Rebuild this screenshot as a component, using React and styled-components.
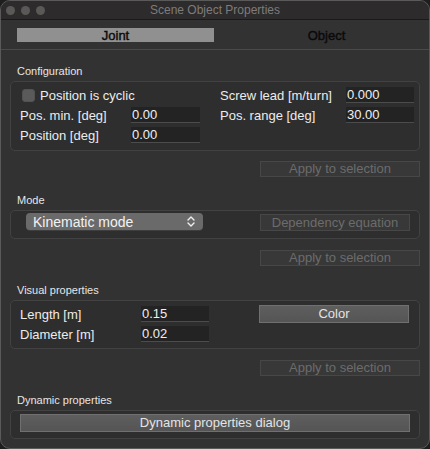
import React from 'react';
import styled, { createGlobalStyle } from 'styled-components';

const GlobalStyle = createGlobalStyle`
  html, body {
    margin: 0;
    padding: 0;
    background: #1e1e1e;
  }
  body {
    font-family: "Liberation Sans", Arial, sans-serif;
  }
`;

const Window = styled.div`
  width: 430px;
  height: 449px;
  box-sizing: border-box;
  background: #323232;
  border: 1px solid #5a5a5a;
  border-radius: 10px;
  overflow: hidden;
  display: flex;
  flex-direction: column;
`;

const TitleBar = styled.div`
  height: 18px;
  flex: none;
  background: #2d2b2b;
  border-bottom: 1px solid #1a1a1a;
  display: flex;
  align-items: center;
  position: relative;
  padding-left: 5px;
  gap: 6px;
`;

const Light = styled.span`
  width: 9px;
  height: 9px;
  border-radius: 50%;
  background: #5b5858;
`;

const Title = styled.div`
  position: absolute;
  left: 0;
  right: 0;
  text-align: center;
  font-size: 12px;
  color: #7e7b7b;
  pointer-events: none;
`;

const TabBar = styled.div`
  display: grid;
  grid-template-columns: 197px 197px;
  column-gap: 14px;
  padding: 8px 0 7px 16px;
  border-bottom: 1px solid #4a4a4a;
`;

const Tab = styled.div`
  height: 14px;
  line-height: 15px;
  text-align: center;
  font-size: 13px;
  color: #0a0a0a;
  -webkit-text-stroke: 0.4px #0a0a0a;
  background: ${p => (p.$active ? '#909090' : 'transparent')};
`;

const Content = styled.div`
  display: flex;
  flex-direction: column;
  padding: 0 9px 0 9px;
`;

const SectionLabel = styled.div`
  font-size: 11px;
  line-height: 14px;
  color: #e6e6e6;
  margin: ${p => p.$top}px 0 3px 7px;
`;

const Group = styled.div`
  border: 1px solid #424242;
  border-radius: 5px;
  background: #2e2e2e;
  padding: ${p => p.$pad};
`;

const FormGrid = styled.div`
  display: grid;
  grid-template-columns: ${p => p.$cols};
  grid-auto-rows: 16px;
  row-gap: 4px;
  align-items: center;
`;

const Label = styled.span`
  font-size: 13px;
  color: #ececec;
  white-space: nowrap;
`;

const Field = styled.div`
  height: 15px;
  background: #232323;
  border-bottom: 1px solid #4c4c4c;
  font-size: 13px;
  line-height: 16px;
  color: #f0f0f0;
  padding-left: 1px;
`;

const CheckRow = styled.label`
  grid-column: 1 / span 2;
  display: flex;
  align-items: center;
  gap: 5px;
  padding-left: 2px;
`;

const CheckBox = styled.span`
  width: 13px;
  height: 13px;
  border-radius: 3px;
  background: #5a5a5a;
  border: 1px solid #525252;
  box-sizing: border-box;
`;

const Spacer = styled.span``;

const ApplyRow = styled.div`
  display: flex;
  justify-content: flex-end;
  margin-top: ${p => p.$top}px;
`;

const DisabledButton = styled.div`
  width: ${p => p.$w}px;
  height: ${p => p.$h || 16}px;
  margin-top: ${p => p.$mt || 0}px;
  box-sizing: border-box;
  border: 1px solid #474747;
  background: #383838;
  color: #6c6c6c;
  font-size: 13px;
  line-height: ${p => (p.$h || 16) - 2}px;
  text-align: center;
`;

const Button = styled.div`
  width: ${p => p.$w};
  height: 18px;
  box-sizing: border-box;
  border: 1px solid #707070;
  background: linear-gradient(#5e5e5e, #555555);
  color: #e4e4e4;
  font-size: 13px;
  line-height: 16px;
  text-align: center;
`;

const ModeRow = styled.div`
  display: flex;
  align-items: flex-start;
  justify-content: space-between;
  padding: 0 9px 0 15px;
`;

const Select = styled.div`
  width: 177px;
  height: 17px;
  box-sizing: border-box;
  border-radius: 4px;
  background: #6a6a6a;
  box-shadow: 0 1px 0 #3e3e3e;
  display: flex;
  align-items: center;
  justify-content: space-between;
  padding: 0 8px 0 7px;
  color: #f2f2f2;
  font-size: 14px;
`;

const ColorCell = styled.div`
  align-self: start;
  margin-top: -1px;
`;

const Chevrons = () => (
  <svg width="8" height="11" viewBox="0 0 8 11" fill="none" stroke="#f0f0f0" strokeWidth="1.4" strokeLinecap="round" strokeLinejoin="round">
    <path d="M1 4 L4 1 L7 4" />
    <path d="M1 7 L4 10 L7 7" />
  </svg>
);

const App = () => {
  return (
    <>
      <GlobalStyle />
      <Window>
        <TitleBar>
          <Light />
          <Light />
          <Light />
          <Title>Scene Object Properties</Title>
        </TitleBar>
        <TabBar>
          <Tab $active>Joint</Tab>
          <Tab>Object</Tab>
        </TabBar>
        <Content>
          <SectionLabel $top={14}>Configuration</SectionLabel>
          <Group $pad="5px 0 7px 9px">
            <FormGrid $cols="111px 69px 20px 126px 68px">
              <CheckRow>
                <CheckBox />
                <Label>Position is cyclic</Label>
              </CheckRow>
              <Spacer />
              <Label>Screw lead [m/turn]</Label>
              <Field>0.000</Field>
              <Label>Pos. min. [deg]</Label>
              <Field>0.00</Field>
              <Spacer />
              <Label>Pos. range [deg]</Label>
              <Field>30.00</Field>
              <Label>Position [deg]</Label>
              <Field>0.00</Field>
            </FormGrid>
          </Group>
          <ApplyRow $top={10}>
            <DisabledButton $w={160}>Apply to selection</DisabledButton>
          </ApplyRow>

          <SectionLabel $top={16}>Mode</SectionLabel>
          <Group $pad="2px 0 7px 0">
            <ModeRow>
              <Select>
                <span>Kinematic mode</span>
                <Chevrons />
              </Select>
              <DisabledButton $w={150} $h={17} $mt={1}>Dependency equation</DisabledButton>
            </ModeRow>
          </Group>
          <ApplyRow $top={11}>
            <DisabledButton $w={160}>Apply to selection</DisabledButton>
          </ApplyRow>

          <SectionLabel $top={17}>Visual properties</SectionLabel>
          <Group $pad="5px 0 6px 9px">
            <FormGrid $cols="121px 68px 50px 150px">
              <Label>Length [m]</Label>
              <Field>0.15</Field>
              <Spacer />
              <ColorCell>
                <Button $w="150px">Color</Button>
              </ColorCell>
              <Label>Diameter [m]</Label>
              <Field>0.02</Field>
            </FormGrid>
          </Group>
          <ApplyRow $top={11}>
            <DisabledButton $w={160}>Apply to selection</DisabledButton>
          </ApplyRow>

          <SectionLabel $top={17}>Dynamic properties</SectionLabel>
          <Group $pad="3px 9px 6px 9px">
            <Button $w="100%">Dynamic properties dialog</Button>
          </Group>
        </Content>
      </Window>
    </>
  );
};

export default App;
